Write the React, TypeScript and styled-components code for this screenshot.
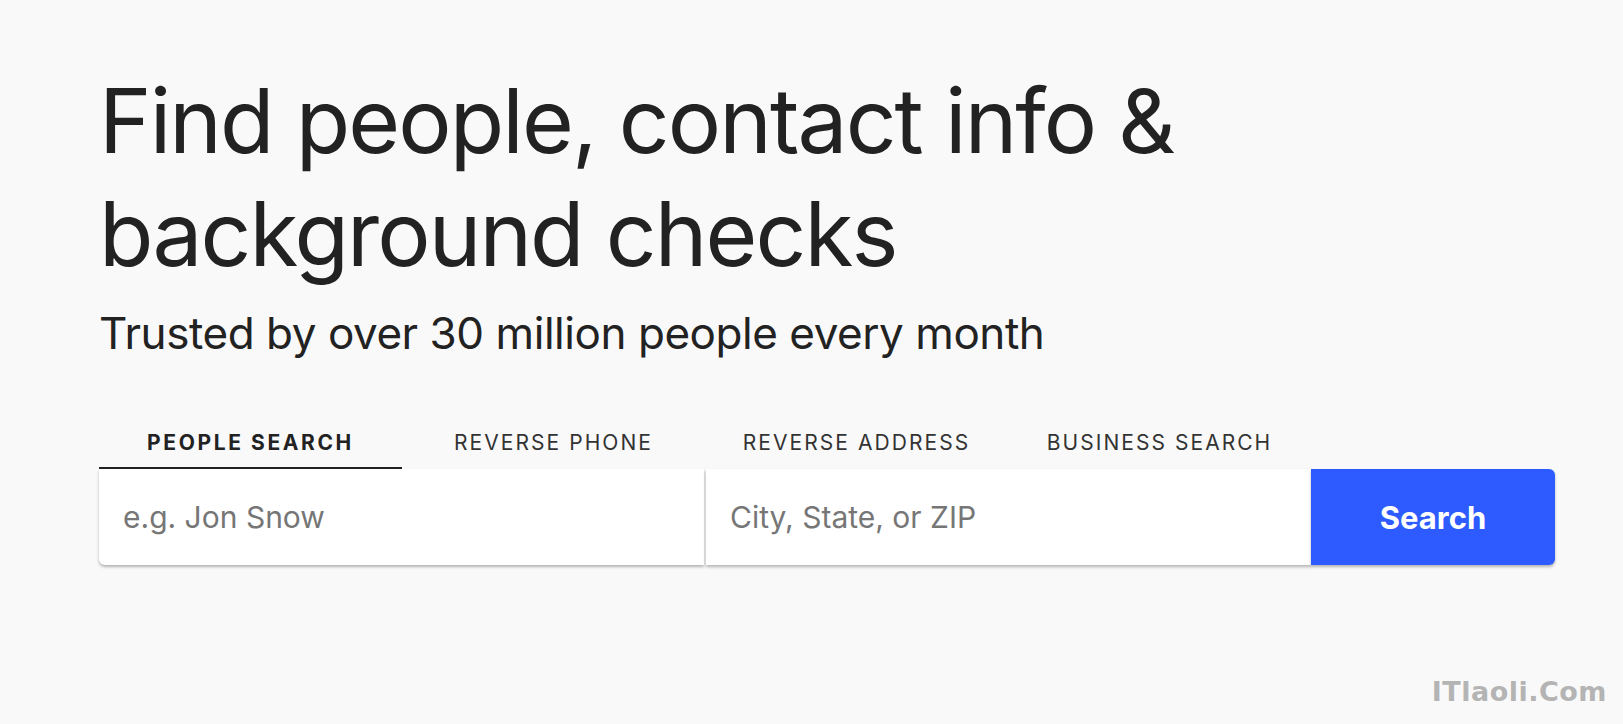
import React, { useState } from "react";
import styled, { createGlobalStyle } from "styled-components";

const GlobalStyle = createGlobalStyle`
  html, body {
    margin: 0;
    padding: 0;
    background: #f9f9f9;
  }
  body {
    font-family: Inter, "Noto Sans", Arial, sans-serif;
    color: #222222;
    -webkit-font-smoothing: antialiased;
  }
  * { box-sizing: border-box; }
`;

const Page = styled.main`
  position: relative;
  min-height: 724px;
  padding: 64px 0 0 99px;
`;

const Hero = styled.section`
  width: 1456px;
  display: flex;
  flex-direction: column;
`;

const Title = styled.h1`
  margin: 0;
  font-size: 89px;
  font-weight: 400;
  line-height: 113px;
  letter-spacing: -1.9px;
  color: #222222;
`;

const Subtitle = styled.p`
  margin: 15px 0 0;
  font-size: 44px;
  font-weight: 400;
  line-height: 56px;
  letter-spacing: -0.45px;
  color: #222222;
`;

const Tabs = styled.nav`
  margin-top: 62px;
  display: grid;
  grid-template-columns: repeat(4, 303px);
`;

const Tab = styled.button<{ $active?: boolean }>`
  all: unset;
  box-sizing: border-box;
  cursor: pointer;
  height: 46px;
  padding-bottom: 5px;
  display: flex;
  align-items: center;
  justify-content: center;
  font-family: Inter, Arial, sans-serif;
  font-size: 21px;
  letter-spacing: ${(p) => (p.$active ? "2.6px" : "2.05px")};
  font-weight: ${(p) => (p.$active ? 700 : 400)};
  color: ${(p) => (p.$active ? "#222222" : "#333333")};
  border-bottom: 2px solid ${(p) => (p.$active ? "#222222" : "transparent")};
`;

const SearchBar = styled.form`
  display: flex;
  gap: 2px;
  height: 96px;
`;

const Field = styled.input<{ $first?: boolean }>`
  flex: 0 0 605px;
  height: 100%;
  border: none;
  outline: none;
  background: #ffffff;
  padding: 0 24px;
  font-family: Inter, Arial, sans-serif;
  font-size: 30px;
  color: #222222;
  border-radius: ${(p) => (p.$first ? "0 0 0 6px" : "0")};
  box-shadow: 0 2px 3px rgba(0, 0, 0, 0.28);
  &::placeholder {
    color: #767676;
  }
`;

const SearchButton = styled.button`
  flex: 1;
  margin-left: -2px;
  height: 100%;
  border: none;
  background: #2d5bff;
  color: #ffffff;
  font-family: Inter, Arial, sans-serif;
  font-size: 31px;
  font-weight: 700;
  border-radius: 0 6px 6px 0;
  box-shadow: 0 2px 3px rgba(0, 0, 0, 0.28);
  cursor: pointer;
`;

const Watermark = styled.span`
  position: absolute;
  right: 16px;
  bottom: 17px;
  font-family: "DejaVu Sans", sans-serif;
  font-size: 27px;
  font-weight: 700;
  color: #b4b4b4;
  letter-spacing: 0.5px;
`;

const tabs = ["People Search", "Reverse Phone", "Reverse Address", "Business Search"];

export default function App() {
  const [active, setActive] = useState(0);
  return (
    <>
      <GlobalStyle />
      <Page>
        <Hero>
          <Title>
            Find people, contact info &amp;
            <br />
            background checks
          </Title>
          <Subtitle>Trusted by over 30 million people every month</Subtitle>
          <Tabs>
            {tabs.map((t, i) => (
              <Tab key={t} $active={i === active} onClick={() => setActive(i)}>
                {t.toUpperCase()}
              </Tab>
            ))}
          </Tabs>
          <SearchBar onSubmit={(e) => e.preventDefault()}>
            <Field $first placeholder="e.g. Jon Snow" />
            <Field placeholder="City, State, or ZIP" />
            <SearchButton type="submit">Search</SearchButton>
          </SearchBar>
        </Hero>
        <Watermark>ITlaoli.Com</Watermark>
      </Page>
    </>
  );
}
